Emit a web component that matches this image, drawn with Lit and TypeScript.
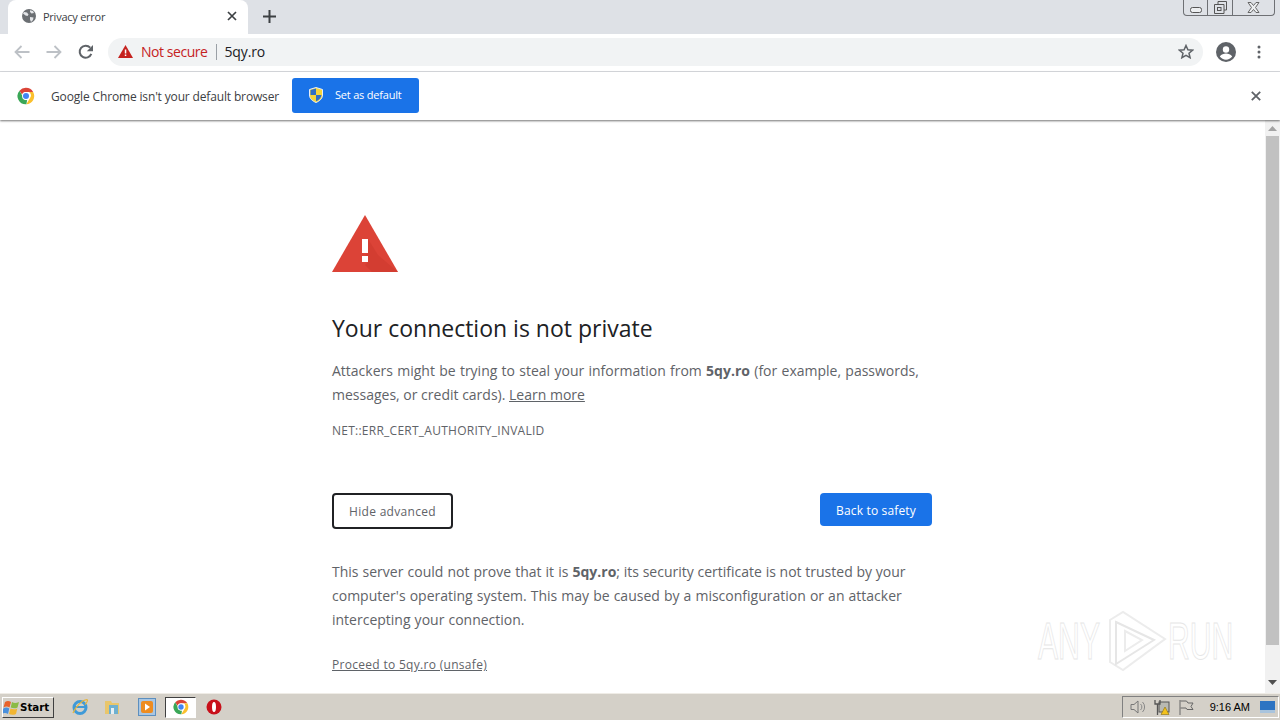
import { LitElement, css, html } from "lit";
import { customElement } from "lit/decorators.js";

const chromeLogo = (size: number) => html`
  <svg width=${size} height=${size} viewBox="0 0 48 48">
    <path d="M24 2a22 22 0 0 1 19.05 11H24a11 11 0 0 0-10.4 7.4L6.6 9.8A22 22 0 0 1 24 2z" fill="#db4437" />
    <path d="M43.05 13A22 22 0 0 1 25 46l9.6-16.5A11 11 0 0 0 32 13z" fill="#fbc02d" />
    <path d="M25 46A22 22 0 0 1 6.6 9.8l9.6 16.6A11 11 0 0 0 24 35c1 0 2-.1 3-.4z" fill="#3aa757" />
    <circle cx="24" cy="24" r="10.5" fill="#fff" />
    <circle cx="24" cy="24" r="8" fill="#4285f4" />
  </svg>
`;

@customElement("app-root")
export class AppRoot extends LitElement {
  override render() {
    return html`
      <div class="screen">
        <div class="tabstrip">
          <div class="tab">
            <svg class="globe" width="16" height="16" viewBox="0 0 16 16">
              <circle cx="8" cy="8" r="7" fill="#6b6f73" />
              <path d="M3 4l3 .5 1.500 2-1 1.500-2-.5-2.500-2zM9 2.200l3 .8 1 2-2.500.5-1.500-1.500zM9 9l3.500.5-.5 2.500-2 2-1-2.500z" fill="#e3e5e8" />
            </svg>
            <span class="tab-title">Privacy error</span>
            <svg class="tab-close" width="10" height="10" viewBox="0 0 10 10">
              <path d="M1 1l8 8M9 1l-8 8" stroke="#3c4043" stroke-width="1.700" fill="none" />
            </svg>
          </div>
          <svg class="new-tab" width="13" height="13" viewBox="0 0 13 13">
            <path d="M6.500 0v13M0 6.500h13" stroke="#3c4043" stroke-width="2" fill="none" />
          </svg>
          <div class="win-controls">
            <div class="win-btn min"><svg width="12" height="6" viewBox="0 0 12 6"><rect x="0.500" y="0.500" width="11" height="5" rx="2" fill="#eceef0" stroke="#555" /></svg></div>
            <div class="win-btn max">
              <svg width="13" height="13" viewBox="0 0 13 13">
                <path d="M4 3V.5h8.500V9H10M.5 3.500H10V12.500H.5z" fill="#dee1e6" stroke="#555" />
                <rect x="3.500" y="6.500" width="3.500" height="3" fill="none" stroke="#555" />
              </svg>
            </div>
            <div class="win-btn close">
              <svg width="13" height="11" viewBox="0 0 13 11">
                <path d="M1 .5h3l2.500 3 2.500-3h3L8.500 5.500l3.500 5H9l-2.500-3-2.500 3H1l3.500-5z" fill="#eceef0" stroke="#666" />
              </svg>
            </div>
          </div>
        </div>

        <div class="toolbar">
          <svg class="nav" width="16" height="14" viewBox="0 0 16 14">
            <path d="M15.500 7H2M7.500 1L1.500 7l6 6" fill="none" stroke="#bdc1c6" stroke-width="1.800" />
          </svg>
          <svg class="nav fwd" width="16" height="14" viewBox="0 0 16 14">
            <path d="M.5 7H14M8.500 1l6 6-6 6" fill="none" stroke="#bdc1c6" stroke-width="1.800" />
          </svg>
          <svg class="nav reload" width="16" height="16" viewBox="0 0 16 16">
            <path d="M13.300 9.800A6 6 0 1 1 12.200 3.700" fill="none" stroke="#5f6368" stroke-width="2" />
            <path d="M15 1v6.200H8.800z" fill="#5f6368" />
          </svg>
          <div class="omnibox">
            <svg class="warn" width="15" height="13" viewBox="0 0 15 13">
              <path d="M7.500 0L15 13H0z" fill="#c5221f" />
              <rect x="6.800" y="4.500" width="1.500" height="4" fill="#fff" />
              <rect x="6.800" y="9.500" width="1.500" height="1.500" fill="#fff" />
            </svg>
            <span class="not-secure">Not secure</span>
            <span class="sep"></span>
            <span class="url">5qy.ro</span>
            <svg class="star" width="16" height="15" viewBox="0 0 16 15">
              <path d="M8 1.500l1.900 4.300 4.600.4-3.500 3 1.100 4.500L8 11.300l-4.100 2.400L5 9.200l-3.500-3 4.600-.4z" fill="none" stroke="#5f6368" stroke-width="1.500" />
            </svg>
          </div>
          <svg class="avatar" width="20" height="20" viewBox="0 0 20 20">
            <circle cx="10" cy="10" r="10" fill="#5f6368" />
            <circle cx="10" cy="7.500" r="3.200" fill="#fff" />
            <path d="M3.800 14.500c1.500-2.200 3.900-3 6.200-3s4.700.8 6.200 3c-1.500 2-3.700 3.200-6.200 3.200s-4.700-1.200-6.200-3.200z" fill="#fff" />
          </svg>
          <svg class="menu" width="4" height="14" viewBox="0 0 4 14">
            <circle cx="2" cy="2" r="1.500" fill="#5f6368" />
            <circle cx="2" cy="7" r="1.500" fill="#5f6368" />
            <circle cx="2" cy="12" r="1.500" fill="#5f6368" />
          </svg>
        </div>

        <div class="infobar">
          <span class="info-logo">${chromeLogo(18)}</span>
          <span class="info-text">Google Chrome isn't your default browser</span>
          <button class="set-default">
            <svg width="14" height="16" viewBox="0 0 14 16">
              <path d="M7 .5l6.500 2v5.500c0 3.500-2.800 6-6.500 7.500C3.300 14 .5 11.500.5 8V2.500z" fill="#f5d53a" stroke="#e8eef8" />
              <path d="M7 1.500v6.500H1.500V3zM7 8h5.500c-.2 3-2.500 5-5.500 6.300z" fill="#2f6fc4" />
            </svg>
            <span>Set as default</span>
          </button>
          <svg class="info-close" width="10" height="10" viewBox="0 0 10 10">
            <path d="M.8.8l8.400 8.400M9.200.8L.8 9.200" stroke="#5f6368" stroke-width="1.800" fill="none" />
          </svg>
        </div>

        <div class="viewport">
          <main class="page">
            <svg class="big-warn" width="66" height="57" viewBox="0 0 66 57">
              <path d="M33 0l33 57H0z" fill="#dc4337" />
              <path d="M36 24v14l-3 3 3 6-3 3 7 7h26L46 40z" fill="#c9372c" opacity="0.500" />
              <rect x="30" y="24" width="6" height="14" fill="#fff" />
              <rect x="30" y="41" width="6" height="6" fill="#fff" />
            </svg>
            <h1>Your connection is not private</h1>
            <p class="body intro">
              Attackers might be trying to steal your information from <b>5qy.ro</b> (for example, passwords,
              <span class="plain">messages, or credit cards). <a>Learn more</a></span>
            </p>
            <div class="code">NET::ERR_CERT_AUTHORITY_INVALID</div>
            <div class="buttons">
              <button class="hide-adv">Hide advanced</button>
              <button class="back">Back to safety</button>
            </div>
            <p class="body details">
              This server could not prove that it is <b>5qy.ro</b><span class="tight">; its security certificate is not trusted by your</span>
              computer's operating system. This may be caused by a misconfiguration or an attacker
              intercepting your connection.
            </p>
            <a class="proceed">Proceed to 5qy.ro (unsafe)</a>
          </main>

          <div class="watermark">
            <span class="wm-word">ANY</span>
            <svg width="60" height="62" viewBox="0 0 60 62">
              <path d="M3 10L16 2l42 27-42 31-13-8z" fill="none" stroke="#ececec" stroke-width="2" />
              <path d="M9 12l38 18-38 24z" fill="none" stroke="#e6e6e6" stroke-width="2" />
              <path d="M18 21l17 9-17 11z" fill="none" stroke="#ececec" stroke-width="2" />
            </svg>
            <span class="wm-word run">RUN</span>
          </div>

          <div class="scrollbar">
            <svg width="9" height="5" viewBox="0 0 9 5"><path d="M4.500 0L9 5H0z" fill="#a3a3a3" /></svg>
            <div class="thumb"></div>
            <svg width="9" height="5" viewBox="0 0 9 5"><path d="M0 0h9L4.500 5z" fill="#505050" /></svg>
          </div>
        </div>

        <div class="taskbar">
          <button class="start">
            <svg width="17" height="15" viewBox="0 0 17 15">
              <path d="M2 2c2-1.500 4-1.500 6 0l-1.500 5.500C4.500 6 2.500 6 .5 7.500z" fill="#e8622a" />
              <path d="M9 2c2 1.200 4 1.200 7 0l-1.500 5.500c-2.500 1.200-4.500 1-6.800 0z" fill="#8bbb45" />
              <path d="M.3 8.500c2-1.500 4-1.500 6 0L5 14c-2-1.500-4-1.500-6 0z" fill="#4a90dc" />
              <path d="M7.500 8.500c2.300 1 4.300 1.200 6.800 0L13 14c-2.500 1.200-5 1-7 0z" fill="#f2b632" />
            </svg>
            <span>Start</span>
          </button>
          <div class="quick">
            <svg width="18" height="18" viewBox="0 0 18 18">
              <circle cx="9" cy="9.500" r="6" fill="none" stroke="#3f9ad8" stroke-width="3" />
              <path d="M4 9h10" stroke="#3f9ad8" stroke-width="2" />
              <path d="M2 15C5 8 11 2 16 1.500c1.500 1-1 4-2 5" fill="none" stroke="#e8b53a" stroke-width="1.200" />
            </svg>
            <svg width="18" height="16" viewBox="0 0 18 16">
              <path d="M1 2h6l1 2h7v11H1z" fill="#e9c66b" />
              <rect x="5" y="6" width="9" height="9" fill="#6fb0d0" />
              <rect x="7" y="9" width="3" height="6" fill="#e7eff3" />
            </svg>
            <svg class="media" width="18" height="18" viewBox="0 0 18 18">
              <rect x="0.500" y="0.500" width="17" height="17" fill="#a9c6e2" stroke="#5c8fbf" />
              <rect x="3" y="3" width="12" height="12" rx="2" fill="#ee8c1f" />
              <path d="M7 5.500l5 3.500-5 3.500z" fill="#fff" />
            </svg>
            <div class="task-active">${chromeLogo(16)}</div>
            <svg width="16" height="16" viewBox="0 0 16 16">
              <circle cx="8" cy="8" r="7.500" fill="#c8101a" />
              <ellipse cx="8" cy="8" rx="2" ry="5" fill="#fff" />
            </svg>
          </div>
          <div class="tray">
            <svg width="16" height="14" viewBox="0 0 16 14">
              <path d="M1 4.500h3L8 1v12L4 9.500H1z" fill="#d4d0c8" stroke="#777" />
              <path d="M10.500 4a4 4 0 0 1 0 6M12.500 2a7 7 0 0 1 0 10" fill="none" stroke="#888" />
            </svg>
            <svg width="16" height="16" viewBox="0 0 16 16">
              <rect x="5" y="3" width="10" height="10" fill="#b9b9b2" stroke="#555" />
              <path d="M1 1v4h5V1M3.500 5v11" fill="none" stroke="#555" stroke-width="1.300" />
              <path d="M11 8l4 7.500H7z" fill="#f3c21b" stroke="#8a6d0b" stroke-width="0.600" />
            </svg>
            <svg width="16" height="16" viewBox="0 0 16 16">
              <path d="M2 1v15M2.500 2h6l1.500 2h5l-2 3.500 2 3H9L8 9H2.500" fill="none" stroke="#666" />
            </svg>
            <span class="clock">9:16 AM</span>
            <svg class="show-desktop" width="15" height="12" viewBox="0 0 15 12">
              <rect width="15" height="12" fill="#2e74c2" />
              <rect y="9" width="15" height="3" fill="#a9c4dd" />
            </svg>
          </div>
        </div>
      </div>
    `;
  }

  static override styles = css`
    :host {
      display: block;
      font-family: "Open Sans", "Noto Sans", sans-serif;
      color: #3c4043;
    }

    .screen {
      width: 1280px;
      height: 720px;
      display: flex;
      flex-direction: column;
      overflow: hidden;
      background: #fff;
    }

    button {
      font-family: inherit;
      cursor: pointer;
    }

    /* tab strip */
    .tabstrip {
      height: 34px;
      flex: none;
      display: flex;
      align-items: flex-start;
      background: #dee1e6;
      padding-left: 8px;
    }

    .tab {
      width: 240px;
      height: 34px;
      box-sizing: border-box;
      display: flex;
      align-items: center;
      background: #fff;
      border-radius: 8px 8px 0 0;
      padding: 0 12px 2px;
    }

    .globe {
      flex: none;
      margin-left: 1px;
    }

    .tab-title {
      margin-left: 6px;
      font-size: 11px;
      flex: 1;
      letter-spacing: -0.25px;
    }

    .tab-close {
      flex: none;
      margin-right: -1px;
    }

    .new-tab {
      margin: 10px 0 0 15px;
    }

    .win-controls {
      margin-left: auto;
      margin-right: 5px;
      height: 16px;
      display: flex;
      border: 1px solid #6e7074;
      border-top: none;
      border-radius: 0 0 4px 4px;
      box-sizing: border-box;
    }

    .win-btn {
      display: flex;
      align-items: center;
      justify-content: center;
      border-right: 1px solid #6e7074;
    }

    .win-btn.min {
      width: 24px;
      padding-top: 5px;
      box-sizing: border-box;
    }

    .win-btn.max {
      width: 24px;
    }

    .win-btn.close {
      width: 41px;
      border-right: none;
    }

    /* toolbar */
    .toolbar {
      height: 38px;
      flex: none;
      box-sizing: border-box;
      display: flex;
      align-items: center;
      background: #fff;
      border-bottom: 1px solid #dadce0;
      padding: 0 19px 2px 14px;
    }

    .nav.fwd {
      margin-left: 16px;
    }

    .nav.reload {
      margin-left: 16px;
    }

    .omnibox {
      margin-left: 14px;
      width: 1095px;
      height: 28px;
      box-sizing: border-box;
      display: flex;
      align-items: center;
      background: #f1f3f4;
      border-radius: 14px;
      padding: 0 10px;
    }

    .warn {
      flex: none;
    }

    .not-secure {
      margin-left: 8px;
      font-size: 14px;
      color: #c5221f;
      letter-spacing: -0.45px;
    }

    .sep {
      width: 1px;
      height: 16px;
      background: #9aa0a6;
      margin: 0 8px;
    }

    .url {
      font-size: 14px;
      color: #202124;
      letter-spacing: -0.15px;
    }

    .star {
      margin-left: auto;
      margin-right: -1px;
    }

    .avatar {
      margin-left: 13px;
    }

    .menu {
      margin-left: 21px;
    }

    /* infobar */
    .infobar {
      height: 48px;
      flex: none;
      box-sizing: border-box;
      display: flex;
      align-items: center;
      background: #fff;
      padding: 0 19px 0 17px;
      box-shadow: 0 1px 2px rgba(0, 0, 0, 0.55);
      position: relative;
      z-index: 1;
    }

    .info-logo {
      display: flex;
    }

    .info-text {
      margin-left: 16px;
      font-size: 12px;
      letter-spacing: -0.15px;
    }

    .set-default {
      margin: -2px 0 0 13px;
      width: 127px;
      height: 35px;
      display: flex;
      align-items: center;
      gap: 12px;
      padding: 0 17px;
      border: none;
      border-radius: 3px;
      background: #1a73e8;
      color: #fff;
      font-size: 11px;
      letter-spacing: -0.2px;
      white-space: nowrap;
    }

    .set-default span {
      margin-top: -2px;
    }

    .info-close {
      margin-left: auto;
    }

    /* page */
    .viewport {
      flex: 1;
      min-height: 0;
      position: relative;
      display: flex;
      justify-content: space-between;
    }

    .page {
      padding: 95px 0 0 332px;
      width: 600px;
      display: flex;
      flex-direction: column;
      align-items: flex-start;
    }

    .big-warn {
      flex: none;
    }

    h1 {
      margin: 40px 0 0;
      font-size: 23px;
      font-weight: 400;
      line-height: 33px;
      color: #202124;
    }

    .body {
      margin: 14px 0 0;
      width: 600px;
      font-size: 14px;
      line-height: 24px;
      color: #5f6368;
    }

    .intro {
      word-spacing: 0.65px;
    }

    .plain {
      word-spacing: 0;
    }

    .body b {
      color: #5f6368;
      font-weight: 700;
    }

    .body a {
      text-decoration: underline;
    }

    .code {
      margin-top: 16px;
      font-size: 12px;
      line-height: 16px;
      color: #5f6368;
      letter-spacing: 0.25px;
    }

    .buttons {
      margin-top: 54px;
      width: 600px;
      display: flex;
      justify-content: space-between;
      align-items: flex-start;
    }

    .hide-adv {
      width: 121px;
      height: 36px;
      background: #fff;
      border: 2px solid #202124;
      border-radius: 4px;
      color: #5f6368;
      font-size: 12px;
      letter-spacing: 0.3px;
      padding: 0;
    }

    .back {
      width: 112px;
      height: 33px;
      background: #1a73e8;
      border: none;
      border-radius: 4px;
      color: #fff;
      font-size: 12px;
      letter-spacing: 0.15px;
      padding: 1px 0 0;
    }

    .details {
      margin-top: 31px;
      word-spacing: 0.45px;
    }

    .tight {
      word-spacing: 0.1px;
    }

    .proceed {
      margin-top: 25px;
      font-size: 12px;
      line-height: 16px;
      color: #5f6368;
      letter-spacing: 0.3px;
      text-decoration: underline;
    }

    .watermark {
      position: absolute;
      left: 1038px;
      top: 490px;
      display: flex;
      align-items: center;
      gap: 7px;
      font-family: "Liberation Sans", sans-serif;
      font-size: 52px;
      line-height: 62px;
      color: transparent;
      -webkit-text-stroke: 1px #e6e6e6;
    }

    .wm-word {
      display: block;
      width: 62px;
      white-space: nowrap;
      transform: scaleX(0.58);
      transform-origin: left;
    }

    .wm-word.run {
      margin-left: -6px;
    }

    .scrollbar {
      width: 15px;
      flex: none;
      display: flex;
      flex-direction: column;
      align-items: center;
      background: #f1f1f1;
      padding: 6px 0 8px;
      box-sizing: border-box;
    }

    .thumb {
      width: 13px;
      flex: 1;
      background: #c1c1c1;
      margin: 5px 0 35px;
    }

    /* taskbar */
    .taskbar {
      height: 27px;
      flex: none;
      box-sizing: border-box;
      display: flex;
      align-items: center;
      background: #d4d0c8;
      border-top: 1px solid #efece6;
      padding-left: 2px;
    }

    .start {
      width: 52px;
      height: 21px;
      display: flex;
      align-items: center;
      gap: 0;
      padding: 0;
      background: #d4d0c8;
      border: 1px solid;
      border-color: #fff #404040 #404040 #fff;
      font-family: "DejaVu Sans", sans-serif;
      font-weight: 700;
      font-size: 10.300px;
      color: #000;
    }

    .quick {
      margin-left: 17px;
      display: flex;
      align-items: center;
      gap: 15px;
    }

    .media {
      margin-left: 1px;
    }

    .task-active {
      width: 31px;
      height: 21px;
      margin: 0 -5px 0 -6px;
      display: flex;
      align-items: center;
      justify-content: center;
      background: #fff;
      border: 1px solid;
      border-color: #404040 #fff #fff #404040;
      box-sizing: border-box;
    }

    .tray {
      margin-left: auto;
      margin-right: 1px;
      width: 157px;
      height: 22px;
      box-sizing: border-box;
      display: flex;
      align-items: center;
      gap: 8px;
      padding: 0 3px 0 7px;
      border: 1px solid;
      border-color: #808080 #fff #fff #808080;
    }

    .clock {
      margin-left: auto;
      font-family: "Liberation Sans", sans-serif;
      font-size: 11px;
      color: #000;
    }

    .show-desktop {
      margin-left: 2px;
    }
  `;
}
